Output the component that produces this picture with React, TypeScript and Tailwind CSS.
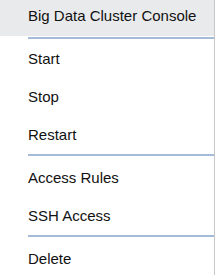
import React from "react";

type Group = string[];

const groups: Group[] = [
  ["Start", "Stop", "Restart"],
  ["Access Rules", "SSH Access"],
  ["Delete"],
];

function Item({ label }: { label: string }) {
  return (
    <div className="flex h-[38px] items-center pl-[28px] text-[15px] leading-4 text-[#111]">
      {label}
    </div>
  );
}

function Separator({ gap }: { gap: string }) {
  return <div className={`ml-[28px] h-[2px] bg-[#a5bcd9] ${gap}`} />;
}

export default function App() {
  return (
    <div
      className="w-[215px] h-[275px] overflow-hidden bg-white border-r border-[#c8c8c8]"
      style={{ fontFamily: '"Liberation Sans", Arial, sans-serif' }}
    >
      {/* Highlighted header item */}
      <div className="mb-[1px] h-[36px] bg-[#e9eaec] pl-[28px] pt-[8px] text-[15px] leading-4 text-[#111]">
        Big Data Cluster Console
      </div>
      <Separator gap="mb-[1px]" />
      {groups[0].map((g) => (
        <Item key={g} label={g} />
      ))}
      <Separator gap="mb-[3px]" />
      {groups[1].map((g) => (
        <Item key={g} label={g} />
      ))}
      <Separator gap="mb-[3px]" />
      {groups[2].map((g) => (
        <Item key={g} label={g} />
      ))}
    </div>
  );
}
